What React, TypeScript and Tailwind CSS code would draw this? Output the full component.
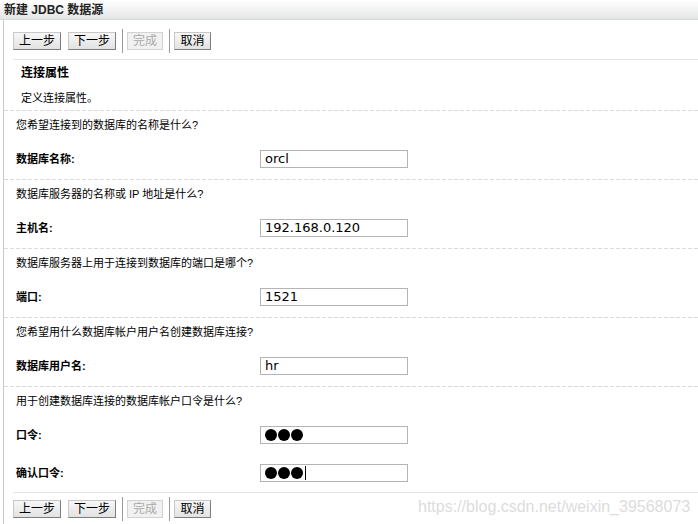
import React from "react";

const cjk = { fontFamily: '"Liberation Sans", "Noto Sans CJK SC", sans-serif' };
const inputFont = { fontFamily: '"DejaVu Sans", "Noto Sans CJK SC", sans-serif' };

function Btn({ label, w, disabled }: { label: string; w: string; disabled?: boolean }) {
  return (
    <div
      className={
        "h-[18px] flex items-center justify-center text-[12px] leading-none border " +
        w +
        (disabled
          ? " bg-[#f1f1f1] text-[#a9a9a9] border-[#d2d2d2]"
          : " bg-[linear-gradient(#f7f7f7,#e2e2e2)] text-black border-t-[#c8c8c8] border-l-[#c8c8c8] border-b-[#7d7d7d] border-r-[#7d7d7d]")
      }
    >
      {label}
    </div>
  );
}

function Toolbar() {
  return (
    <div className="flex items-center pl-[9px]">
      <Btn label="上一步" w="w-[48px]" />
      <div className="ml-[7px]">
        <Btn label="下一步" w="w-[48px]" />
      </div>
      <div className="ml-[6px] w-px h-[24px] bg-[#9a9a9a]" />
      <div className="ml-[4px]">
        <Btn label="完成" w="w-[36px]" disabled />
      </div>
      <div className="ml-[6px] w-px h-[24px] bg-[#9a9a9a]" />
      <div className="ml-[4px]">
        <Btn label="取消" w="w-[37px]" />
      </div>
    </div>
  );
}

function Dashed() {
  return <div className="h-px bg-[repeating-linear-gradient(90deg,#dadada_0_4px,transparent_4px_6px)]" />;
}

function Field({ label, children }: { label: string; children: React.ReactNode }) {
  return (
    <div className="flex items-center pl-[12px] h-[18px]">
      <div className="w-[244px] text-[11px] font-bold text-black">{label}</div>
      <div
        className="w-[148px] h-[18px] border border-[#b4b4b4] bg-white flex items-center pl-[4px] text-[13px] text-black"
        style={inputFont}
      >
        {children}
      </div>
    </div>
  );
}

function Dots({ cursor }: { cursor?: boolean }) {
  return (
    <div className="flex items-center gap-px">
      <span className="w-[12px] h-[12px] rounded-full bg-black" />
      <span className="w-[12px] h-[12px] rounded-full bg-black" />
      <span className="w-[12px] h-[12px] rounded-full bg-black" />
      {cursor && <span className="w-px h-[14px] bg-black ml-px" />}
    </div>
  );
}

function Section({ q, label, value }: { q: string; label: string; value: string }) {
  return (
    <div>
      <Dashed />
      <div className="h-[28px] flex items-center pl-[12px] text-[11px] text-black">{q}</div>
      <div className="pt-[11px] pb-[11px]">
        <Field label={label}>{value}</Field>
      </div>
    </div>
  );
}

export default function App() {
  return (
    <div className="relative w-[698px] h-[524px] bg-white overflow-hidden" style={cjk}>
      <div className="h-[20px] bg-[linear-gradient(#ffffff,#e4e6e5)] border-b border-[#d6d9d8] flex items-center pl-[4px] text-[12px] font-bold text-[#222]">
        新建 JDBC 数据源
      </div>
      <div className="ml-[3px] border-l border-[#c9c9c9] h-[504px]">
        <div className="h-[39px] pt-[3px] flex items-center">
          <Toolbar />
        </div>
        <div className="ml-[9px] h-px bg-[#e4e4e4]" />
        <div className="h-[26px] flex items-center pl-[17px] text-[12px] font-bold text-black">连接属性</div>
        <div className="h-[24px] flex items-center pl-[17px] text-[11px] text-black">定义连接属性。</div>
        <Section q="您希望连接到的数据库的名称是什么?" label="数据库名称:" value="orcl" />
        <Section q="数据库服务器的名称或 IP 地址是什么?" label="主机名:" value="192.168.0.120" />
        <Section q="数据库服务器上用于连接到数据库的端口是哪个?" label="端口:" value="1521" />
        <Section q="您希望用什么数据库帐户用户名创建数据库连接?" label="数据库用户名:" value="hr" />
        <div>
          <Dashed />
          <div className="h-[28px] flex items-center pl-[12px] text-[11px] text-black">
            用于创建数据库连接的数据库帐户口令是什么?
          </div>
          <div className="pt-[11px]">
            <Field label="口令:">
              <Dots />
            </Field>
          </div>
          <div className="pt-[20px] pb-[10px]">
            <Field label="确认口令:">
              <Dots cursor />
            </Field>
          </div>
        </div>
        <div className="ml-[9px] h-px bg-[#e4e4e4]" />
        <div className="h-[30px] pt-[2px] flex items-center">
          <Toolbar />
        </div>
      </div>
      <div
        className="absolute left-[418px] top-[497px] text-[16px] leading-[20px] text-[#dcdcdc]"
        style={{ fontFamily: '"Liberation Sans", sans-serif' }}
      >
        https://blog.csdn.net/weixin_39568073
      </div>
    </div>
  );
}
